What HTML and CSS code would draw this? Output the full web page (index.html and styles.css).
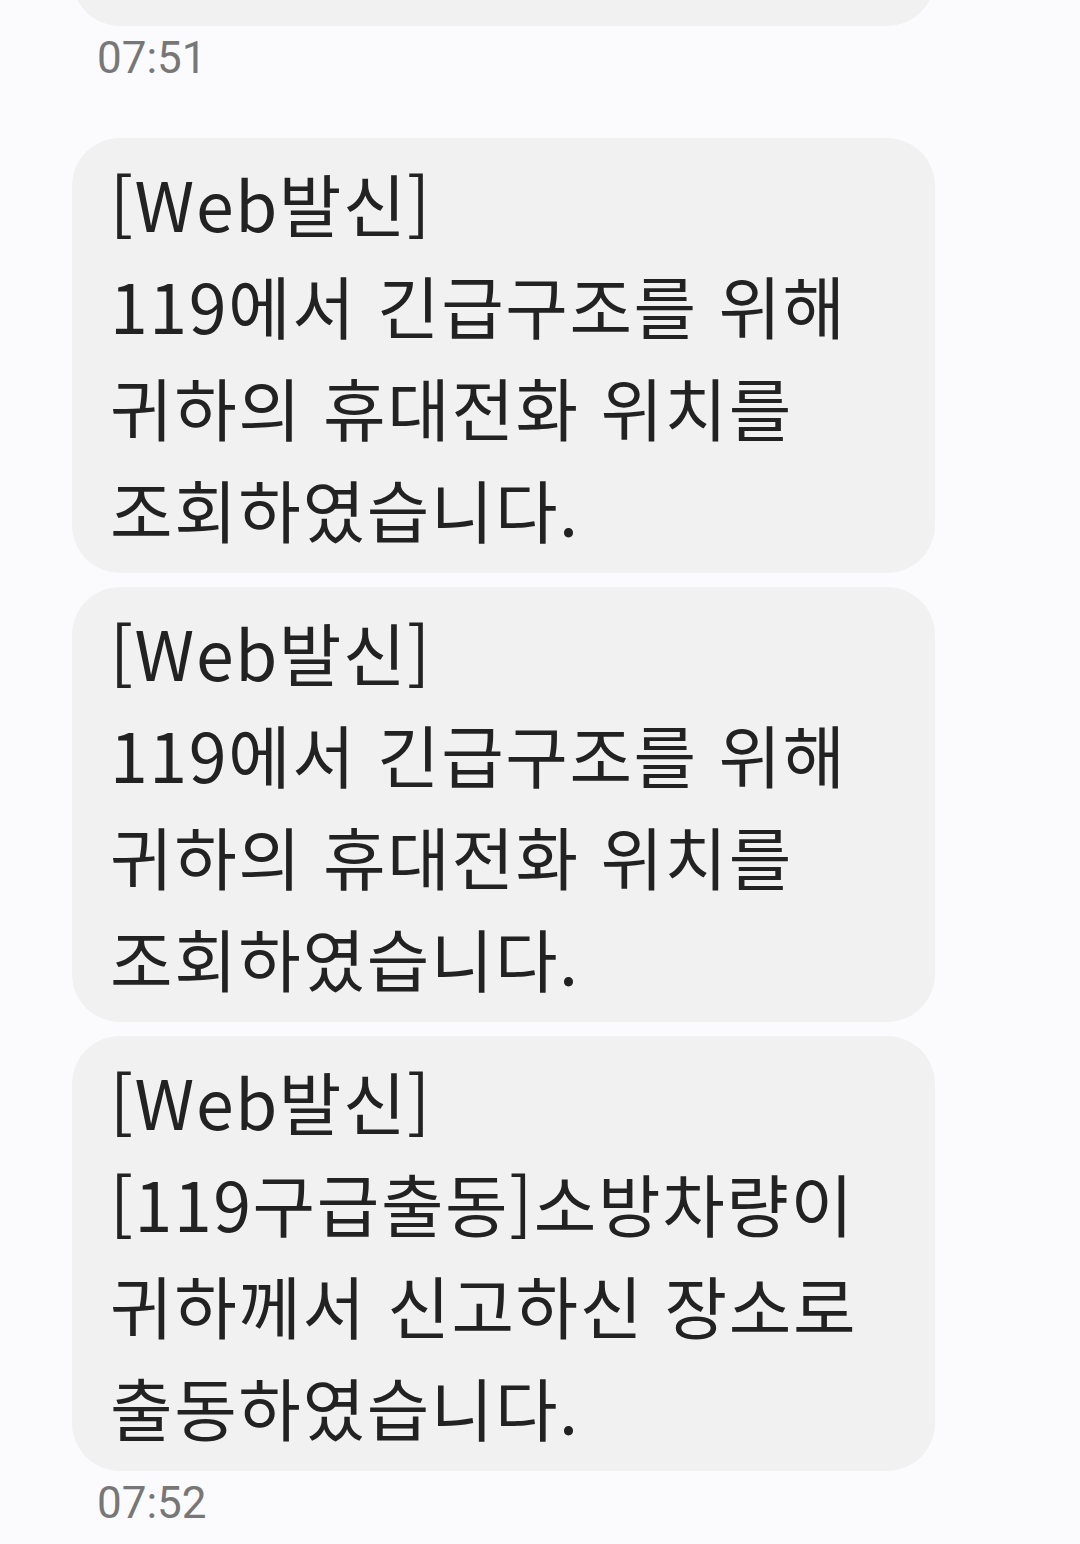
FILE: index.html
```html
<!DOCTYPE html>
<html lang="ko">
<head>
    <meta charset="UTF-8">
    <meta name="viewport" content="width=device-width, initial-scale=1.0">
    <title>메시지</title>
    <link rel="stylesheet" href="styles.css">
</head>
<body>
    <div class="thread">
        <div class="bubble cut"></div>
        <p class="time">07:51</p>

        <div class="group">
            <div class="bubble">[Web발신]<br>119에서 긴급구조를 위해<br>귀하의 휴대전화 위치를<br>조회하였습니다.</div>
            <div class="bubble">[Web발신]<br>119에서 긴급구조를 위해<br>귀하의 휴대전화 위치를<br>조회하였습니다.</div>
            <div class="bubble">[Web발신]<br>[119구급출동]소방차량이<br>귀하께서 신고하신 장소로<br>출동하였습니다.</div>
        </div>
        <p class="time">07:52</p>
    </div>
</body>
</html>
```

FILE: styles.css
```css
body {
    margin: 0;
    background-color: #fbfbfd;
    font-family: 'Noto Sans CJK KR', 'Noto Sans', sans-serif;
    color: #222;
}
.thread {
    width: 863px;
    margin-left: 72px;
}
.bubble {
    background-color: #f1f1f1;
    border-radius: 48px;
    padding: 14px 20px 13px 38px;
    font-size: 68px;
    line-height: 102px;
    letter-spacing: 1.6px;
    white-space: nowrap;
}
.bubble.cut {
    height: 100px;
    padding: 0;
    margin-top: -74px;
}
.group {
    display: flex;
    flex-direction: column;
    gap: 14px;
}
.time {
    margin: 3px 0 0 25px;
    font-family: Roboto, 'Noto Sans', sans-serif;
    font-size: 44px;
    line-height: 58px;
    color: #777;
    height: 109px;
}
```
